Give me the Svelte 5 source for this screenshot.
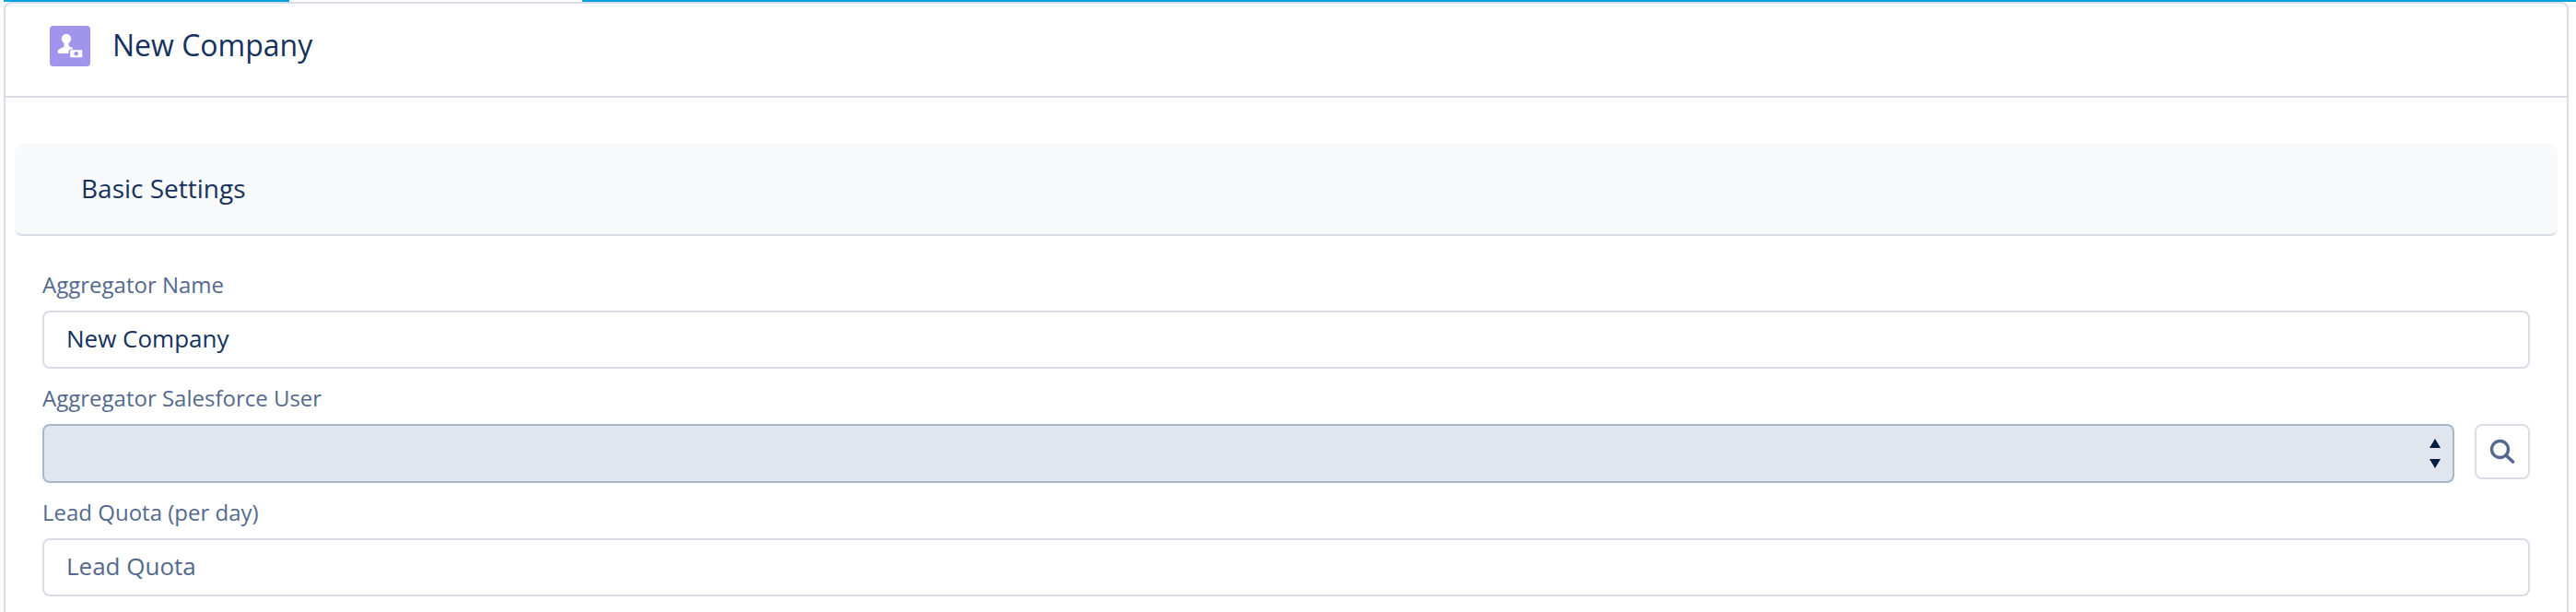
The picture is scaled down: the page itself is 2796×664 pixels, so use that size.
<script>
    let aggregatorName = "New Company";
</script>

<div class="tabs">
    <div class="tab-line first"></div>
    <div class="tab-line active"></div>
    <div class="tab-line rest"></div>
</div>

<main class="card">
    <header class="card-header">
        <span class="icon">
            <svg viewBox="0 0 44 44" width="44" height="44" aria-hidden="true">
                <circle cx="18" cy="14" r="5.2" fill="#fff" />
                <path d="M15.5 18h5v3.5c1 1.2 2.6 2 4.5 2.6v1.4h-2.5a2 2 0 0 0-2 2v2.5H11c-1.6 0-2.4-1-2.4-2.3 0-1.6 2-3 6.9-4.7z" fill="#fff" />
                <path fill-rule="evenodd" d="M23 26.3h11.5a.8.8 0 0 1 .8.8v6.4a.8.8 0 0 1-.8.8H23a.8.8 0 0 1-.8-.8v-6.4a.8.8 0 0 1 .8-.8zm5.7 1.7a2.3 2.3 0 1 0 0 4.6 2.3 2.3 0 0 0 0-4.6z" fill="#fff" />
            </svg>
        </span>
        <h1>New Company</h1>
    </header>

    <section class="section-title">
        <h2>Basic Settings</h2>
    </section>

    <form class="fields">
        <div class="field">
            <label for="name">Aggregator Name</label>
            <input id="name" type="text" bind:value={aggregatorName} />
        </div>
        <div class="field">
            <label for="user">Aggregator Salesforce User</label>
            <div class="lookup">
                <div id="user" class="select">
                    <svg viewBox="0 0 12 32" width="12" height="32" aria-hidden="true">
                        <path d="M6 0l6 10H0zM6 32L0 22h12z" fill="#061c3f" />
                    </svg>
                </div>
                <button type="button" class="search" aria-label="Search">
                    <svg viewBox="0 0 30 30" width="30" height="30" aria-hidden="true">
                        <circle cx="12.5" cy="12.5" r="9" fill="none" stroke="#54698d" stroke-width="3.4" />
                        <path d="M19 19l7.5 7" fill="none" stroke="#54698d" stroke-width="3.6" stroke-linecap="round" />
                    </svg>
                </button>
            </div>
        </div>
        <div class="field">
            <label for="quota">Lead Quota (per day)</label>
            <input id="quota" type="text" placeholder="Lead Quota" />
        </div>
    </form>
</main>

<style>
    :global(body) {
        margin: 0;
        background: #fff;
    }

    .tabs {
        display: flex;
        height: 2px;
        padding-left: 4px;
    }

    .tab-line {
        height: 2px;
        background: #00a1df;
    }

    .tab-line.first {
        width: 310px;
    }

    .tab-line.active {
        width: 318px;
        background: #fff;
    }

    .tab-line.rest {
        flex: 1;
    }

    .card {
        box-sizing: border-box;
        width: 2784px;
        height: 662px;
        margin-left: 4px;
        border: 2px solid #d8dde6;
        border-bottom: none;
        border-radius: 8px 8px 0 0;
        font-family: "Open Sans", "Lato", sans-serif;
        color: #16325c;
        overflow: hidden;
    }

    .card-header {
        box-sizing: border-box;
        display: flex;
        align-items: center;
        gap: 24px;
        height: 102px;
        padding: 0 0 8px 48px;
        border-bottom: 2px solid #d8dde6;
    }

    .icon {
        display: block;
        width: 44px;
        height: 44px;
        border-radius: 4px;
        background: #a094ed;
    }

    .icon svg {
        display: block;
    }

    h1 {
        margin: 0 0 4px;
        font-size: 32px;
        font-weight: 400;
    }

    .section-title {
        box-sizing: border-box;
        display: flex;
        align-items: center;
        height: 100px;
        margin: 50px 10px 0 10px;
        padding: 0 0 2px 72px;
        background: #f7f9fb;
        border-bottom: 2px solid #d8dde6;
        border-radius: 8px;
    }

    h2 {
        margin: 0;
        font-size: 28px;
        font-weight: 400;
    }

    .fields {
        display: flex;
        flex-direction: column;
        gap: 14px;
        padding: 35px 40px 0 40px;
    }

    .field {
        display: flex;
        flex-direction: column;
    }

    label {
        height: 46px;
        font-size: 24px;
        line-height: 36px;
        color: #54698d;
    }

    input {
        box-sizing: border-box;
        width: 100%;
        height: 63px;
        padding: 0 24px 4px;
        border: 2px solid #d8dde6;
        border-radius: 8px;
        background: #fff;
        font: inherit;
        font-size: 26px;
        color: #16325c;
        outline: none;
    }

    input::placeholder {
        color: #54698d;
        opacity: 1;
    }

    .lookup {
        display: flex;
        align-items: flex-start;
        gap: 22px;
    }

    .select {
        box-sizing: border-box;
        display: flex;
        align-items: center;
        justify-content: flex-end;
        flex: 1;
        height: 64px;
        padding-right: 13px;
        border: 2px solid #a8b7c7;
        border-radius: 8px;
        background: #e0e5ee;
    }

    .search {
        box-sizing: border-box;
        display: flex;
        align-items: center;
        justify-content: center;
        width: 60px;
        height: 60px;
        padding: 0;
        border: 2px solid #d8dde6;
        border-radius: 8px;
        background: #fff;
    }
</style>
